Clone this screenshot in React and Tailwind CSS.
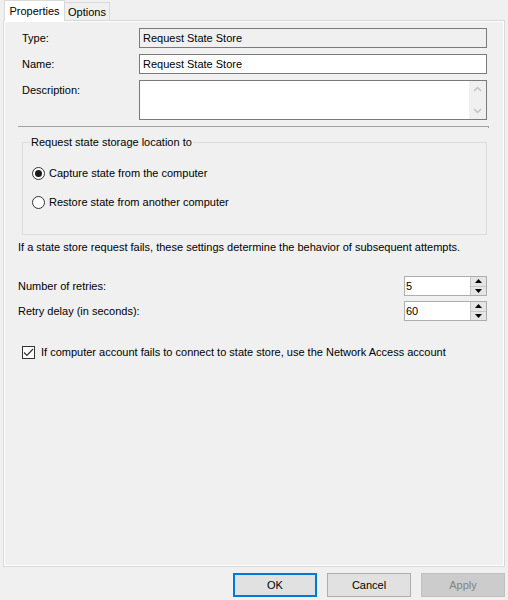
import React from "react";

const field = "h-[20px] w-[348px] border border-[#7a7a7a] px-[3px] flex items-center";

function Radio({ checked, label }) {
  return (
    <div className="flex items-center h-[14px]">
      <div className="w-[13px] h-[13px] rounded-full border border-[#333] bg-white flex items-center justify-center">
        {checked && <div className="w-[7px] h-[7px] rounded-full bg-[#1a1a1a]" />}
      </div>
      <span className="ml-[4px]">{label}</span>
    </div>
  );
}

function Spin({ value }) {
  return (
    <div className="w-[83px] h-[20px] border border-[#adadad] bg-white flex">
      <div className="flex-1 pl-[1px] flex items-center">{value}</div>
      <div className="w-[16px] flex flex-col">
        <div className="flex-1 bg-[#e5e5e5] border-l border-b border-[#c8c8c8] flex items-center justify-center">
          <svg width="7" height="4" viewBox="0 0 7 4"><path d="M3.5 0 L7 4 L0 4 Z" fill="#000" /></svg>
        </div>
        <div className="flex-1 bg-[#e5e5e5] border-l border-[#c8c8c8] flex items-center justify-center">
          <svg width="7" height="4" viewBox="0 0 7 4"><path d="M0 0 L7 0 L3.5 4 Z" fill="#000" /></svg>
        </div>
      </div>
    </div>
  );
}

export default function App() {
  return (
    <div className="w-[508px] h-[600px] bg-[#f0f0f0] text-[11px] leading-[14px] text-black font-['Liberation_Sans',Arial,sans-serif] flex flex-col">
      <div className="flex items-end h-[20px] pl-[4px]">
        <div className="relative z-10 -mb-px h-[21px] w-[61px] bg-white border border-b-0 border-[#d9d9d9] flex items-center justify-center pb-[1px]">Properties</div>
        <div className="h-[18px] w-[45px] border border-l-0 border-b-0 border-[#d9d9d9] flex items-center justify-center">Options</div>
      </div>

      <div className="mx-[3px] h-[547px] border border-[#d9d9d9] shadow-[inset_1px_1px_0_#fff,inset_-1px_-1px_0_#fff] flex flex-col pl-[14px]">
        <div className="mt-[7px] flex items-center">
          <div className="w-[121px] pl-[4px]">Type:</div>
          <div className={field + " bg-[#f0f0f0]"}>Request State Store</div>
        </div>
        <div className="mt-[6px] flex items-center">
          <div className="w-[121px] pl-[4px]">Name:</div>
          <div className={field + " bg-white"}>Request State Store</div>
        </div>
        <div className="mt-[6px] flex items-start">
          <div className="w-[121px] pl-[4px] pt-[3px]">Description:</div>
          <div className="h-[40px] w-[348px] border border-[#7a7a7a] bg-white flex justify-end">
            <div className="w-[17px] bg-[#f0f0f0] flex flex-col justify-between items-center py-[5px]">
              <svg width="9" height="6" viewBox="0 0 9 6"><path d="M1 5 L4.5 1.5 L8 5" stroke="#c2c2c2" strokeWidth="1.5" fill="none" /></svg>
              <svg width="9" height="6" viewBox="0 0 9 6"><path d="M1 1 L4.5 4.5 L8 1" stroke="#c2c2c2" strokeWidth="1.5" fill="none" /></svg>
            </div>
          </div>
        </div>
        <div className="mt-[6px] flex items-start">
          <div className="h-px w-[470px] bg-[#a0a0a0]" />
          <div className="h-[2px] w-px bg-[#a0a0a0]" />
        </div>

        <div className="relative mt-[14px] ml-[4px] w-[465px] h-[93px] border border-[#dcdcdc] pt-[23px] pl-[9px] flex flex-col gap-[15px]">
          <span className="absolute -top-[8px] left-[7px] px-[1px] bg-[#f0f0f0]">Request state storage location to</span>
          <Radio checked label="Capture state from the computer" />
          <Radio label="Restore state from another computer" />
        </div>

        <div className="mt-[5px]">If a state store request fails, these settings determine the behavior of subsequent attempts.</div>

        <div className="mt-[22px] w-[469px] flex items-center justify-between">
          <span>Number of retries:</span>
          <Spin value="5" />
        </div>
        <div className="mt-[5px] w-[469px] flex items-center justify-between">
          <span>Retry delay (in seconds):</span>
          <Spin value="60" />
        </div>

        <div className="mt-[24px] ml-[4px] flex items-center h-[14px]">
          <div className="w-[13px] h-[13px] border border-[#333] bg-white flex items-center justify-center">
            <svg width="11" height="9" viewBox="0 0 11 9"><path d="M1 4.5 L4 7.5 L10 1" stroke="#333" strokeWidth="1.2" fill="none" /></svg>
          </div>
          <span className="ml-[6px]">If computer account fails to connect to state store, use the Network Access account</span>
        </div>
      </div>

      <div className="mt-[6px] pr-[3px] flex justify-end gap-[10px]">
        <button type="button" className="w-[84px] h-[24px] border-2 border-[#0078d7] bg-[#e1e1e1]">OK</button>
        <button type="button" className="w-[84px] h-[24px] border border-[#adadad] bg-[#e1e1e1]">Cancel</button>
        <button type="button" className="w-[84px] h-[24px] border border-[#bfbfbf] bg-[#cccccc] text-[#838383]">Apply</button>
      </div>
    </div>
  );
}
